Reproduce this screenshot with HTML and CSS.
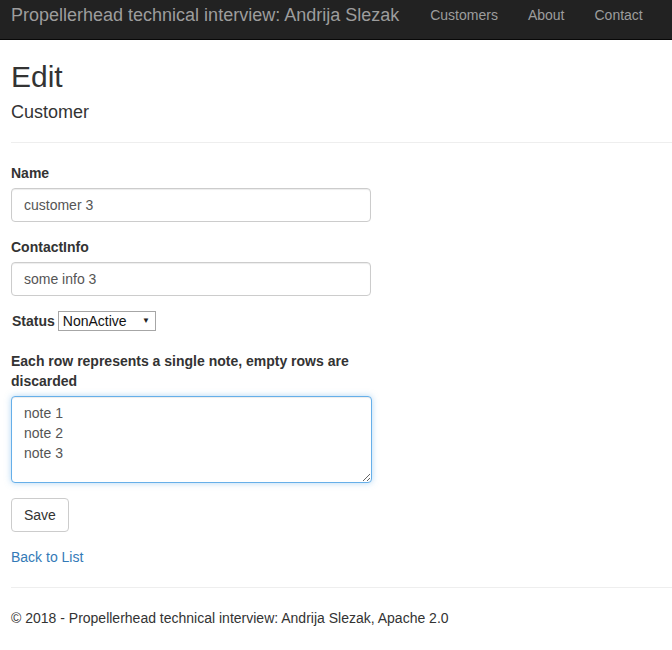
FILE: index.html
```html
<!DOCTYPE html>
<html>
<head>
<meta charset="utf-8">
<title>Edit - Propellerhead technical interview</title>
<link rel="stylesheet" href="styles.css">
</head>
<body>
<nav class="navbar">
  <a class="brand" href="#">Propellerhead technical interview: Andrija Slezak</a>
  <ul class="nav">
    <li><a href="#">Customers</a></li>
    <li><a href="#">About</a></li>
    <li><a href="#">Contact</a></li>
  </ul>
</nav>
<div class="container">
  <h2 class="title">Edit</h2>
  <form class="form">
    <h4 class="subtitle">Customer</h4>
    <hr class="rule">
    <div class="fields">
      <div class="form-group">
        <label class="label">Name</label>
        <input class="control" type="text" value="customer 3">
      </div>
      <div class="form-group">
        <label class="label">ContactInfo</label>
        <input class="control" type="text" value="some info 3">
      </div>
      <div class="form-group status-row">
        <label class="label">Status</label>
        <span class="select-wrap">
          <select class="select">
            <option>Active</option>
            <option selected>NonActive</option>
          </select>
          <span class="select-arrow">▼</span>
        </span>
      </div>
      <div class="form-group">
        <label class="label">Each row represents a single note, empty rows are discarded</label>
        <textarea class="control notes focused">note 1
note 2
note 3</textarea>
      </div>
      <div class="form-group">
        <button class="btn" type="button">Save</button>
      </div>
    </div>
  </form>
  <div class="back"><a class="link" href="#">Back to List</a></div>
  <hr class="rule footer-rule">
  <footer class="footer">
    <p class="footer-text">© 2018 - Propellerhead technical interview: Andrija Slezak, Apache 2.0</p>
  </footer>
</div>
</body>
</html>
```
FILE: styles.css
```css
html, body {
  margin: 0;
  padding: 0;
}
body {
  font-family: "Liberation Sans", Arial, Helvetica, sans-serif;
  font-size: 14px;
  line-height: 20px;
  color: #333;
  background: #fff;
}
.navbar {
  display: flex;
  align-items: flex-start;
  height: 39px;
  background: #222;
  border-bottom: 1px solid #080808;
  padding-left: 11px;
  box-sizing: content-box;
}
.brand {
  font-size: 18px;
  line-height: 20px;
  padding: 5px 16px 0 0;
  color: #9d9d9d;
  text-decoration: none;
}
.nav {
  display: flex;
  list-style: none;
  margin: 0;
  padding: 0;
}
.nav li a {
  display: block;
  padding: 5px 15px 0 15px;
  line-height: 20px;
  color: #9d9d9d;
  text-decoration: none;
}
.container {
  padding: 0 0 20px 11px;
}
.title {
  font-size: 30px;
  line-height: 33px;
  font-weight: 500;
  margin: 20px 0 10px;
}
.subtitle {
  font-size: 18px;
  line-height: 19px;
  font-weight: 500;
  margin: 10px 0 10px;
}
.form {
  margin: 0;
}
.rule {
  border: 0;
  border-top: 1px solid #eee;
  margin: 20px 0;
  height: 0;
}
.fields {
  width: 361px;
}
.form-group {
  margin-bottom: 15px;
}
.label {
  display: inline-block;
  max-width: 100%;
  margin-bottom: 5px;
  font-weight: 700;
}
.control {
  display: block;
  box-sizing: border-box;
  width: 360px;
  height: 34px;
  padding: 6px 12px;
  font-family: "Liberation Sans", Arial, Helvetica, sans-serif;
  font-size: 14px;
  line-height: 20px;
  color: #555;
  background: #fff;
  border: 1px solid #ccc;
  border-radius: 4px;
  box-shadow: inset 0 1px 1px rgba(0,0,0,.075);
  margin: 0;
  outline: none;
}
.notes {
  width: 361px;
  height: 87px;
  resize: both;
}
.focused {
  border-color: #66afe9;
  box-shadow: inset 0 1px 1px rgba(0,0,0,.075), 0 0 6px rgba(102,175,233,.5);
}
.status-row {
  display: flex;
  align-items: flex-start;
  gap: 3px;
  margin-left: 1px;
}
.select-wrap {
  position: relative;
  display: inline-block;
}
.select {
  -webkit-appearance: none;
  appearance: none;
  box-sizing: border-box;
  width: 98px;
  height: 20px;
  margin: 0;
  padding: 0 0 0 4px;
  font-family: "Liberation Sans", Arial, Helvetica, sans-serif;
  font-size: 14px;
  line-height: 18px;
  color: #111;
  background: #fff;
  border: 1px solid #a6a6a6;
  border-radius: 0;
  outline: none;
}
.select-arrow {
  position: absolute;
  right: 6px;
  top: 0;
  font-size: 8px;
  line-height: 20px;
  color: #222;
  pointer-events: none;
}
.btn {
  display: inline-block;
  padding: 6px 12px;
  font-family: "Liberation Sans", Arial, Helvetica, sans-serif;
  font-size: 14px;
  line-height: 20px;
  color: #333;
  background: #fff;
  border: 1px solid #ccc;
  border-radius: 4px;
  cursor: pointer;
}
.back {
  line-height: 20px;
}
.link {
  color: #337ab7;
  text-decoration: none;
}
.footer-text {
  margin: 0 0 10px;
}
```
